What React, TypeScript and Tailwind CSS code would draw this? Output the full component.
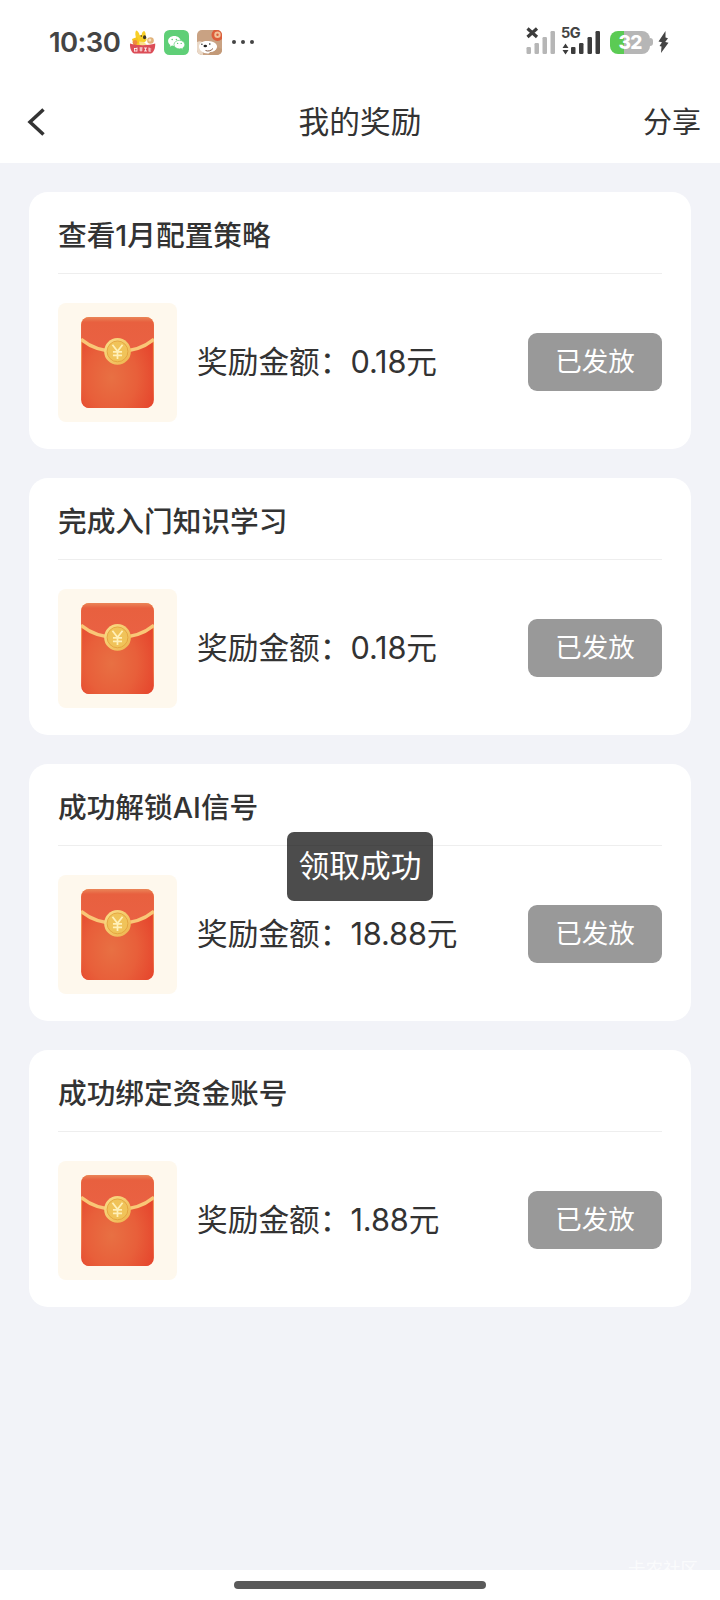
const rewards = [
  { title: '查看1月配置策略', amount: '0.18' },
  { title: '完成入门知识学习', amount: '0.18' },
  { title: '成功解锁AI信号', amount: '18.88' },
  { title: '成功绑定资金账号', amount: '1.88' },
];

const KangarooIcon = () => (
  <svg className="w-[27px] h-[26px]" viewBox="0 0 27 26">
    <path d="M7 1.500c2 .3 3.200 2.500 3.600 4.800l2-.2c.2-2 .9-3.800 2.600-4.100 1.500 1.200 1.700 3.700 1.300 5.800 1.400 1.600 1.600 3.500 0 4.700-1 .8-2.500 1-3.700 1L12 18H6c-1.500-3-.5-5.500 1.600-8C6.300 7.500 5.800 4 7 1.500z" fill="#f8cf28" />
    <path d="M3 10l5-2 3 6-6 3z" fill="#f6c51c" />
    <ellipse cx="15.600" cy="8.300" rx="1.600" ry="2" fill="#3d3524" />
    <circle cx="12.300" cy="7" r=".7" fill="#3d3524" />
    <circle cx="21.500" cy="11.500" r="3.300" fill="#e2b27a" />
    <circle cx="20.800" cy="11" r="1.500" fill="#f3e3c0" />
    <circle cx="6" cy="13.500" r="2.400" fill="#f08a3e" />
    <path d="M10 12.500l5 .5 3 3-7 1z" fill="#fbe08a" />
    <path d="M1 14.500c7 2.200 18 2.200 25.200 0 .3 4.500-1.400 9-4.200 10H5.200C2.400 23.500.7 19 1 14.500z" fill="#dc4d57" />
    <path d="M5.500 19v3.500M5 19.500h3M8 18.500v4M5.500 22h2.500M10.500 19h3.200M10.500 21h3M12 18.500v4M15 19h3M15 22h3M16.500 19v3M20 18.500v4M20 20h2.200M20 22h2" stroke="#fff" strokeOpacity=".8" strokeWidth="1" fill="none" />
  </svg>
);

const WechatIcon = () => (
  <svg className="w-[25px] h-[25px]" viewBox="0 0 25 25">
    <rect width="25" height="25" rx="5.500" fill="#5fcf77" />
    <path d="M10.300 6c-3.500 0-6.200 2.200-6.200 5 0 1.600.9 3 2.300 3.900l-.6 1.900 2.200-1.200c.7.2 1.500.3 2.300.3 3.500 0 6.300-2.200 6.300-4.900C16.600 8.200 13.800 6 10.300 6z" fill="#fff" />
    <path d="M15.400 10.300c-3 0-5.400 1.900-5.400 4.300s2.400 4.300 5.400 4.300c.6 0 1.200-.1 1.800-.3l2 1.100-.5-1.700c1.300-.8 2.100-2 2.100-3.400 0-2.400-2.400-4.300-5.400-4.300z" fill="#fff" stroke="#5fcf77" strokeWidth=".7" />
    <circle cx="8.200" cy="9.500" r=".8" fill="#5fcf77" />
    <circle cx="12.400" cy="9.500" r=".8" fill="#5fcf77" />
    <circle cx="13.600" cy="13.400" r=".7" fill="#5fcf77" />
    <circle cx="17.200" cy="13.400" r=".7" fill="#5fcf77" />
  </svg>
);

const DogIcon = () => (
  <svg className="w-[25px] h-[25px]" viewBox="0 0 25 25">
    <defs>
      <clipPath id="dog">
        <rect width="25" height="25" rx="5" />
      </clipPath>
    </defs>
    <g clipPath="url(#dog)">
      <rect width="25" height="25" fill="#c9a283" />
      <path d="M0 12c2-1 4-1 5 0l1 13H0z" fill="#ead9c8" />
      <path d="M2 16c.5-3.500 5-5.500 9.500-5 4.500.3 8 2 8.500 5 .4 4-4 7.500-9 7.500S1.500 20 2 16z" fill="#fff" />
      <path d="M13 22c3 .3 6-1.500 8-5l4 2v6H11z" fill="#c39a78" />
      <path d="M8.500 20.500c2.500 1 5.200.6 7.500-2" stroke="#7a4b32" strokeWidth=".9" fill="none" />
      <ellipse cx="8.300" cy="16" rx="1.800" ry="1.200" fill="#222" />
      <circle cx="4.900" cy="14.300" r=".7" fill="#222" />
      <circle cx="12.800" cy="14" r=".8" fill="#222" />
      <circle cx="20.500" cy="5" r="6" fill="#dc5e3b" />
      <circle cx="20.500" cy="4.800" r="3.200" fill="#f3c39a" />
      <circle cx="20.500" cy="4.800" r="1.200" fill="#dc5e3b" />
    </g>
  </svg>
);

const StatusBar = () => (
  <div className="flex h-[84px] items-center justify-between pl-[49px] pr-[51px]">
    <div className="flex items-center">
      <span className="w-[80px] whitespace-nowrap pt-[2px] text-[27.5px] font-semibold leading-none tracking-[-0.6px] text-[#444]">
        10:30
      </span>
      <div className="flex items-center gap-[8px]">
        <KangarooIcon />
        <WechatIcon />
        <DogIcon />
      </div>
      <div className="ml-[10px] flex gap-[5px]">
        <i className="size-[4px] rounded-full bg-[#444]" />
        <i className="size-[4px] rounded-full bg-[#444]" />
        <i className="size-[4px] rounded-full bg-[#444]" />
      </div>
    </div>

    <div className="flex items-center">
      <svg className="h-[26px] w-[29px] overflow-visible" viewBox="0 0 29 26">
        <path d="M.5 -.5l9.500 8.500M10 -.5l-9.500 8.500" stroke="#3c3c3c" strokeWidth="3.200" />
        <g fill="#b6b6b6">
          <rect x="-.5" y="18" width="4.500" height="7" rx="1.200" />
          <rect x="7.500" y="14" width="4.500" height="11" rx="1.200" />
          <rect x="15.500" y="8" width="4.500" height="17" rx="1.200" />
          <rect x="23.500" y="2" width="4.500" height="23" rx="1.200" />
        </g>
      </svg>
      <div className="relative ml-[6px] h-[26px] w-[40px]">
        <svg className="h-[26px] w-[40px]" viewBox="0 0 40 26" fill="#3c3c3c">
          <path d="M.5 19L3.500 14.500L6.500 19zM.5 21h6L3.500 25.500z" />
          <rect x="9" y="18" width="4.500" height="7" rx="1" />
          <rect x="17" y="14" width="4.500" height="11" rx="1.200" />
          <rect x="25.500" y="8" width="4.500" height="17" rx="1.200" />
          <rect x="33.500" y="2" width="4.500" height="23" rx="1.200" />
        </svg>
        <span className="absolute -left-[1px] -top-[3px] text-[14.5px] font-bold leading-none tracking-[-0.5px] text-[#444]">5G</span>
      </div>
      <div className="ml-[8px] flex items-center">
        <div className="flex h-[23px] w-[40px] items-center justify-center rounded-[8px] bg-linear-to-r from-[#5bcb54] from-35% to-[#b6b6b6] to-35% text-[19px] font-extrabold leading-none tracking-[-0.8px] text-white">
          32
        </div>
        <div className="h-[8px] w-[3px] rounded-r-full bg-[#b6b6b6]" />
      </div>
      <svg className="ml-[5px] h-[22px] w-[11px]" viewBox="0 0 11 22">
        <path d="M7.500 0L.5 10.500l3.500.8L1.500 15l2 .6L3 22l7.500-10.200-3.300-.8L10 7.200 7.500 6.600z" fill="#444" />
      </svg>
    </div>
  </div>
);

const NavBar = () => (
  <div className="grid h-[79px] grid-cols-3 items-center pb-[4px] pl-[27px] pr-[19px] text-[30.7px] leading-none text-[#333]">
    <svg className="h-[28px] w-[19px]" viewBox="0 0 19 28" fill="none" stroke="#333" strokeWidth="3.500">
      <path d="M16.500 1.500L3 14l13.500 12.500" />
    </svg>
    <h1 className="-ml-[8px] pt-[2px] text-center">我的奖励</h1>
    <span className="pt-[1px] text-right text-[29px]">分享</span>
  </div>
);

const RedPacket = () => (
  <div className="flex size-[119px] items-center justify-center rounded-[8px] bg-[#fef8ed]">
    <svg className="h-[91px] w-[73px]" viewBox="0 0 72 90">
      <defs>
        <radialGradient id="body" cx=".42" cy=".66" r=".72">
          <stop offset="0" stopColor="#e87043" />
          <stop offset=".5" stopColor="#e85f3a" />
          <stop offset="1" stopColor="#e5402a" />
        </radialGradient>
        <linearGradient id="flap" x1="0" y1="0" x2="0" y2="1">
          <stop offset="0" stopColor="#ea8558" />
          <stop offset=".15" stopColor="#e8603f" />
          <stop offset="1" stopColor="#ea6143" />
        </linearGradient>
        <linearGradient id="edge" x1="0" y1="0" x2="0" y2="1">
          <stop offset="0" stopColor="#f2a052" />
          <stop offset=".75" stopColor="#ec6a3c" />
          <stop offset="1" stopColor="#e5402a" />
        </linearGradient>
        <linearGradient id="gold" x1="0" y1="0" x2="1" y2="1">
          <stop offset="0" stopColor="#fbdf8b" />
          <stop offset="1" stopColor="#edb24a" />
        </linearGradient>
      </defs>
      <rect width="72" height="90" rx="8" fill="url(#edge)" />
      <rect x="1" y="1" width="70" height="89" rx="7.500" fill="url(#body)" />
      <path d="M0 21V8a8 8 0 0 1 8-8h56a8 8 0 0 1 8 8v13C50 38 22 38 0 21z" fill="url(#flap)" />
      <path d="M0 22C19 38 53 38 72 22" fill="none" stroke="#f9c777" strokeWidth="3.400" />
      <circle cx="36" cy="34" r="13.200" fill="url(#gold)" />
      <circle cx="36" cy="34" r="10.300" fill="#f0c359" stroke="#e1a03a" strokeWidth=".8" />
      <path d="M31 27.500l5 6.500 5-6.500M36 34v7.500M31.500 34.500h9M31.500 38h9" fill="none" stroke="#fff0b8" strokeWidth="1.700" />
    </svg>
  </div>
);

const RewardCard = ({ title, amount }: { title: string; amount: string }) => (
  <div className="h-[257px] rounded-[19px] bg-white px-[29px]">
    <h2 className="flex h-[82px] items-center border-b border-[#eee] pt-[7px] text-[28.7px] font-medium leading-none text-[#333]">
      {title}
    </h2>
    <div className="flex items-center pt-[28.5px]">
      <RedPacket />
      <p className="ml-[20px] flex-1 whitespace-nowrap text-[30.7px] leading-none text-[#333]">
        奖励金额：<span className="tracking-[-0.1px]">{amount}</span>元
      </p>
      <button className="h-[58px] w-[134px] rounded-[9px] bg-[#999] pb-[2px] text-[26.5px] leading-none text-white">
        已发放
      </button>
    </div>
  </div>
);

export default function App() {
  return (
    <div className="relative flex h-[1600px] w-[720px] flex-col overflow-hidden bg-white font-['Inter','Noto_Sans_CJK_SC',sans-serif]">
      <StatusBar />
      <NavBar />

      <main className="flex flex-1 flex-col gap-[29px] bg-[#f2f3f8] px-[29px] pt-[29px]">
        {rewards.map((reward) => (
          <RewardCard key={reward.title} {...reward} />
        ))}
      </main>

      <div className="flex h-[30px] justify-center pt-[11px]">
        <div className="h-[8px] w-[252px] rounded-full bg-[#5a5a5a]" />
      </div>

      {/* Toast */}
      <div className="absolute left-[287px] top-[832px] flex h-[69px] w-[146px] justify-center rounded-[7px] bg-black/70 pt-[19px] text-[30.7px] leading-none text-white">
        领取成功
      </div>

      <span className="absolute left-[628px] top-[1560px] text-[17.5px] leading-none text-white/70">卡农社区</span>
    </div>
  );
}
